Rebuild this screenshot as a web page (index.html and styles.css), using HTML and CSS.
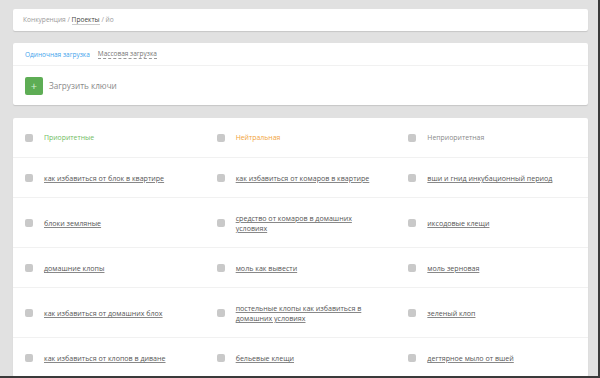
FILE: index.html
```html
<!DOCTYPE html>
<html lang="ru">
<head>
  <meta charset="UTF-8">
  <meta name="viewport" content="width=device-width, initial-scale=1.0">
  <title>Ключи проекта</title>
  <link rel="stylesheet" href="styles.css">
</head>
<body>
  <div class="page">
    <!-- хлебные крошки -->
    <div class="card crumbs">
      <span>Конкуренция</span> / <span class="crumb-current">Проекты</span> / йо
    </div>

    <!-- загрузка ключей -->
    <div class="card upload">
      <div class="tabs">
        <span class="tab tab-active">Одиночная загрузка</span>
        <span class="tab tab-dashed">Массовая загрузка</span>
      </div>
      <div class="upload-body">
        <span class="add-btn">+</span>
        <span class="add-label">Загрузить ключи</span>
      </div>
    </div>

    <!-- таблица ключей -->
    <div class="card keys">
      <div class="row row-head">
        <div class="cell"><span class="check"></span><span class="head head-green">Приоритетные</span></div>
        <div class="cell"><span class="check"></span><span class="head head-orange">Нейтральная</span></div>
        <div class="cell"><span class="check"></span><span class="head head-gray">Неприоритетная</span></div>
      </div>
      <div class="row">
        <div class="cell"><span class="check"></span><a class="key">как избавиться от блок в квартире</a></div>
        <div class="cell"><span class="check"></span><a class="key">как избавиться от комаров в квартире</a></div>
        <div class="cell"><span class="check"></span><a class="key">вши и гнид инкубационный период</a></div>
      </div>
      <div class="row">
        <div class="cell"><span class="check"></span><a class="key">блоки земляные</a></div>
        <div class="cell"><span class="check"></span><a class="key">средство от комаров в домашних условиях</a></div>
        <div class="cell"><span class="check"></span><a class="key">иксодовые клещи</a></div>
      </div>
      <div class="row">
        <div class="cell"><span class="check"></span><a class="key">домашние клопы</a></div>
        <div class="cell"><span class="check"></span><a class="key">моль как вывести</a></div>
        <div class="cell"><span class="check"></span><a class="key">моль зерновая</a></div>
      </div>
      <div class="row">
        <div class="cell"><span class="check"></span><a class="key">как избавиться от домашних блох</a></div>
        <div class="cell"><span class="check"></span><a class="key">постельные клопы как избавиться в домашних условиях</a></div>
        <div class="cell"><span class="check"></span><a class="key">зеленый клоп</a></div>
      </div>
      <div class="row">
        <div class="cell"><span class="check"></span><a class="key">как избавиться от клопов в диване</a></div>
        <div class="cell"><span class="check"></span><a class="key">бельевые клещи</a></div>
        <div class="cell"><span class="check"></span><a class="key">дегтярное мыло от вшей</a></div>
      </div>
    </div>
  </div>
</body>
</html>
```

FILE: styles.css
```css
/* общие */
html, body {
  margin: 0;
  padding: 0;
  height: 100%;
  overflow: hidden;
}

body {
  font-family: 'Open Sans', 'DejaVu Sans', sans-serif;
  background-color: #e1e1e1;
  color: #555;
  box-sizing: border-box;
  border-right: 2px solid #3a3a3a;
  border-bottom: 2px solid #3a3a3a;
}

.page {
  padding: 9px 10px 0 13px;
}

.card {
  background: #fff;
  border-radius: 2px;
  box-shadow: 0 1px 1px rgba(0, 0, 0, 0.12);
}

/* хлебные крошки */
.crumbs {
  height: 22px;
  line-height: 22px;
  padding-left: 10px;
  font-size: 6.6px;
  color: #9a9a9a;
}

.crumb-current {
  color: #444;
  border-bottom: 1px solid #ccc;
}

/* загрузка */
.upload {
  margin-top: 12px;
}

.tabs {
  height: 22px;
  display: flex;
  align-items: center;
  gap: 8px;
  padding-left: 12px;
  border-bottom: 1px solid #f1f1f1;
  font-size: 6.5px;
}

.tab-active {
  color: #3ea3ec;
}

.tab-dashed {
  color: #777;
  border-bottom: 1px dashed #999;
  line-height: 9px;
}

.upload-body {
  height: 39px;
  display: flex;
  align-items: center;
  padding-left: 12px;
}

.add-btn {
  width: 18px;
  height: 18px;
  border-radius: 2px;
  background: #5ead55;
  color: #d9f0d4;
  font-size: 11px;
  line-height: 18px;
  text-align: center;
}

.add-label {
  margin-left: 6px;
  font-size: 8.2px;
  color: #8a8a8a;
}

/* таблица */
.keys {
  margin-top: 13px;
}

.row {
  display: grid;
  grid-template-columns: repeat(3, 1fr);
  border-top: 1px solid #f1f1f1;
}

.row-head {
  border-top: none;
  height: 39px;
}

.cell {
  display: flex;
  align-items: center;
  padding: 15px 14px 14px 12px;
}

.row-head .cell {
  padding-top: 0;
  padding-bottom: 0;
}

.check {
  flex: none;
  width: 8px;
  height: 8px;
  border-radius: 2px;
  background: #c9c9c9;
  margin-right: 11px;
}

.head {
  font-size: 6.9px;
}

.head-green {
  color: #72bd5f;
}

.head-orange {
  color: #f2a33a;
}

.head-gray {
  color: #8a8a8a;
}

.key {
  font-size: 7.1px;
  line-height: 10px;
  color: #555;
  text-decoration: underline;
  text-decoration-color: #888;
}
```
